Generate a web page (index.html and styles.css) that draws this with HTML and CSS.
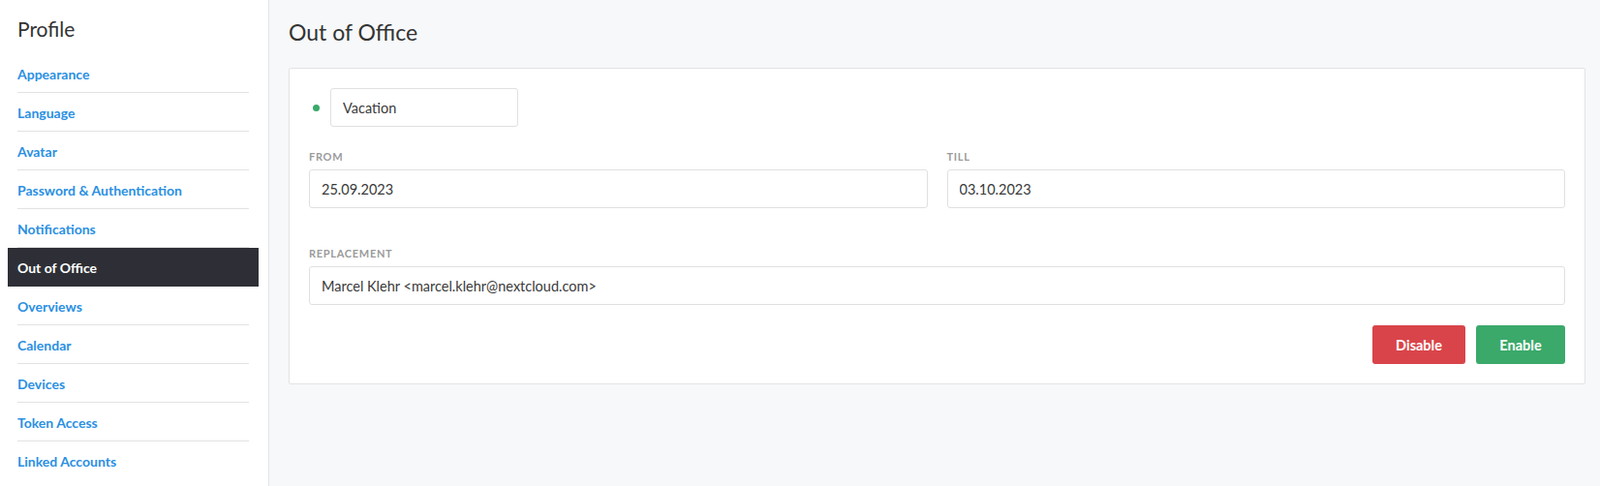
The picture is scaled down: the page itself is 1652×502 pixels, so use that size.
FILE: index.html
```html
<!DOCTYPE html>
<html lang="en">
<head>
<meta charset="utf-8">
<title>Out of Office</title>
<link rel="stylesheet" href="styles.css">
</head>
<body>
<aside class="sidebar">
  <h2 class="sidebar-title">Profile</h2>
  <ul class="nav">
    <li class="nav-item"><a href="#">Appearance</a></li>
    <li class="nav-item"><a href="#">Language</a></li>
    <li class="nav-item"><a href="#">Avatar</a></li>
    <li class="nav-item"><a href="#">Password &amp; Authentication</a></li>
    <li class="nav-item"><a href="#">Notifications</a></li>
    <li class="nav-item active"><a href="#">Out of Office</a></li>
    <li class="nav-item"><a href="#">Overviews</a></li>
    <li class="nav-item"><a href="#">Calendar</a></li>
    <li class="nav-item"><a href="#">Devices</a></li>
    <li class="nav-item"><a href="#">Token Access</a></li>
    <li class="nav-item last"><a href="#">Linked Accounts</a></li>
  </ul>
</aside>
<main class="main">
  <h1 class="page-title">Out of Office</h1>
  <section class="card">
    <div class="status-row">
      <span class="dot"></span>
      <input class="field field-status" type="text" value="Vacation">
    </div>
    <div class="dates">
      <div class="group">
        <label class="label">From</label>
        <input class="field" type="text" value="25.09.2023">
      </div>
      <div class="group">
        <label class="label">Till</label>
        <input class="field" type="text" value="03.10.2023">
      </div>
    </div>
    <div class="group replacement">
      <label class="label">Replacement</label>
      <input class="field" type="text" value="Marcel Klehr <marcel.klehr@nextcloud.com>">
    </div>
    <div class="actions">
      <button class="btn btn-disable">Disable</button>
      <button class="btn btn-enable">Enable</button>
    </div>
  </section>
</main>
</body>
</html>
```
FILE: styles.css
```css
* { box-sizing: border-box; }

html, body {
  margin: 0;
  height: 100%;
}

body {
  display: flex;
  font-family: "Lato", "Open Sans", sans-serif;
  color: #333;
  background: #f7f8fa;
  overflow: hidden;
}

.sidebar {
  width: 278px;
  flex: 0 0 278px;
  background: #fff;
  border-right: 1px solid #e3e4e6;
  padding-top: 18px;
}

.sidebar-title {
  margin: 0 0 14px 18px;
  font-size: 21px;
  line-height: 24px;
  font-weight: 400;
  color: #333;
}

.nav {
  list-style: none;
  margin: 0;
  padding: 0;
}

.nav-item {
  margin: 0 10px 0 8px;
  padding: 0 10px;
}

.nav-item a {
  display: block;
  height: 40px;
  line-height: 41px;
  border-bottom: 1px solid #e2e2e2;
  color: #2a8fe2;
  font-size: 14px;
  font-weight: 700;
  text-decoration: none;
}

.nav-item.active {
  background: #2e2f36;
}

.nav-item.active a {
  color: #fff;
  border-bottom-color: transparent;
}

.nav-item.last a {
  border-bottom: none;
}

.main {
  flex: 1;
  padding: 19px 15px 0 20px;
}

.page-title {
  margin: 0 0 23px 0;
  font-size: 23px;
  line-height: 28px;
  font-weight: 400;
  color: #333;
}

.card {
  background: #fff;
  border: 1px solid #e3e3e3;
  border-radius: 2px;
  padding: 20px;
}

.status-row {
  display: flex;
  align-items: center;
}

.dot {
  width: 7px;
  height: 7px;
  border-radius: 50%;
  background: #3aa96a;
  margin: 0 11px 0 4px;
}

.field {
  display: block;
  width: 100%;
  height: 40px;
  padding: 0 12px;
  border: 1px solid #e0e0e0;
  border-radius: 3px;
  background: #fff;
  font-family: inherit;
  font-size: 14.5px;
  color: #3a3a3a;
  outline: none;
}

.field-status {
  width: 194px;
}

.dates {
  display: grid;
  grid-template-columns: 1fr 1fr;
  gap: 20px;
  margin-top: 23px;
}

.label {
  display: block;
  margin-bottom: 5px;
  font-size: 11px;
  line-height: 16px;
  font-weight: 700;
  letter-spacing: 0.7px;
  text-transform: uppercase;
  color: #9b9b9b;
}

.replacement {
  margin-top: 39px;
}

.actions {
  display: flex;
  justify-content: flex-end;
  gap: 11px;
  margin-top: 21px;
}

.btn {
  height: 40px;
  border: none;
  border-radius: 3px;
  font-family: inherit;
  font-size: 14.5px;
  font-weight: 700;
  color: #fff;
  cursor: pointer;
}

.btn-disable {
  width: 96px;
  background: #d9444a;
}

.btn-enable {
  width: 92px;
  background: #3aa96a;
}
```
